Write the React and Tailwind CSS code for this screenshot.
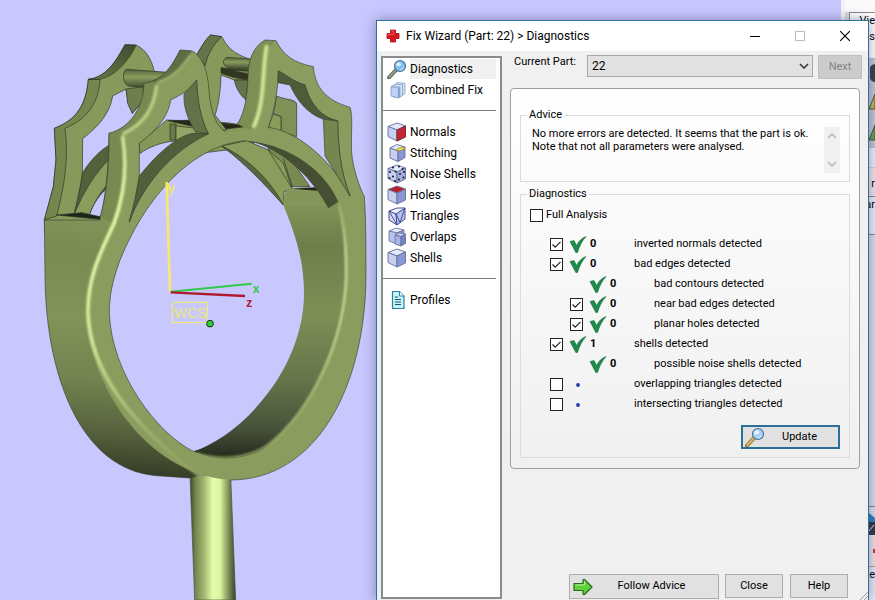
import React, { useState } from 'react';

const FONT = "font-[Roboto,'Liberation_Sans',sans-serif]";

/* ---------- Icons ---------- */

const CrossIcon = () => (
  <svg viewBox="0 0 14 14" className="h-[14px] w-[14px]">
    <path d="M4.500 1h5v3.500H13v5H9.500V13h-5V9.500H1v-5h3.500z" fill="#d8141c" stroke="#a50d12" strokeWidth=".8" />
    <path d="M5.500 2h2v3.500H2v1.500" fill="none" stroke="#f0575b" strokeWidth="1" />
  </svg>
);

const Magnifier = ({ handle = '#8b9a7c', edge = '#59664e', lens = '#7dbdf0' }) => (
  <svg viewBox="0 0 20 20" className="h-5 w-5 shrink-0">
    <path d="M2 18.500 9 11" stroke={edge} strokeWidth="4" strokeLinecap="round" />
    <path d="M2.300 18 9 11" stroke={handle} strokeWidth="2.400" strokeLinecap="round" />
    <circle cx="13" cy="7" r="5.500" fill={lens} stroke="#4a7096" strokeWidth="1.200" />
    <ellipse cx="11.600" cy="5.400" rx="2.600" ry="2" fill="#fff" opacity=".7" />
    <path d="M16.800 7.500a4 4 0 0 1-3.600 3.500" stroke="#d7eeff" fill="none" strokeWidth="1" />
  </svg>
);

const Cube = ({ top = '#e3e9fb', left = '#c7d0f1', right = '#8a98d6', children }) => (
  <svg viewBox="0 0 20 20" className="h-5 w-5 shrink-0" strokeLinejoin="round">
    <path d="M1 4.500 10 1l8.500 3-8.500 4z" fill={top} stroke="#666d94" strokeWidth=".9" />
    <path d="M1 4.500 10 8v11L1 14.500z" fill={left} stroke="#666d94" strokeWidth=".9" />
    <path d="M10 8l8.500-4v11L10 19z" fill={right} stroke="#666d94" strokeWidth=".9" />
    {children}
  </svg>
);

const CombinedIcon = () => (
  <svg viewBox="0 0 20 20" className="h-5 w-5 shrink-0" strokeLinejoin="round" stroke="#7d99c4" strokeWidth=".8">
    <path d="M9 3.500 11.500 2.500 18 3.500v10l-2 1.500H9z" fill="#d3e2f8" />
    <path d="M6.500 5 9 4l6.500 1v10.500L13 17H6.500z" fill="#dfeafb" />
    <path d="M4 6.500 6 5.500l7 1.500-1.500 1.200z" fill="#f3f8ff" />
    <path d="M4 6.500l7.500 1.700V18L4 16z" fill="#bdd3f3" />
    <path d="M11.500 8.200 13 7v10l-1.500 1z" fill="#91aedb" />
  </svg>
);

const NormalsIcon = () => (
  <Cube>
    <path d="M10 8l8.500-4v11L10 19z" fill="#c32733" stroke="#7e2a38" strokeWidth=".9" />
  </Cube>
);

const StitchingIcon = () => (
  <svg viewBox="0 0 20 20" className="h-5 w-5 shrink-0" strokeLinejoin="round" stroke="#666d94" strokeWidth=".9">
    <path d="M3 5 10 1.500 18 4l-7 4z" fill="#e3e9fb" />
    <path d="M3 5l8 3v10.500L3 15z" fill="#c7d0f1" />
    <path d="M11 8l7-4v10.500l-7 4z" fill="#8a98d6" />
    <path d="M9.500 7.400 11 5.200 18 4v1.500l-3.500 1.700L11 8z" fill="#f3e36a" stroke="#8a7d20" strokeWidth=".7" />
  </svg>
);

const NoiseIcon = () => (
  <Cube right="#a3afe0">
    {[[6, 3.500], [12, 2.500], [15.500, 5], [3, 8], [8.500, 7.500], [6, 12.500], [2.500, 14], [13, 10], [17, 8], [12, 15.500], [16.500, 13.500], [8, 17]].map(([x, y]) => (
      <circle key={`${x}-${y}`} cx={x} cy={y} r="1.100" fill="#1d2340" />
    ))}
  </Cube>
);

const HolesIcon = () => <Cube top="#b9202c" />;

const TrianglesIcon = () => (
  <svg viewBox="0 0 20 20" className="h-5 w-5 shrink-0" strokeLinejoin="round" stroke="#4a5295" strokeWidth="1">
    <path d="M2 5 9 8l1 11-8-5z" fill="#d3d9f6" />
    <path d="M9 8l9-6v11l-8 6z" fill="#b5bfeb" />
    <path d="M2 5 10 2l8 0-9 6z" fill="#eef1fd" />
    <path d="M2 5l8 14M9 8l4 8.500L18 2" fill="none" />
  </svg>
);

const OverlapsIcon = () => (
  <svg viewBox="0 0 20 20" className="h-5 w-5 shrink-0" strokeLinejoin="round" stroke="#666d94" strokeWidth=".8">
    <path d="M2 4 9 1l8 2-7 3z" fill="#e3e9fb" />
    <path d="M2 4l8 2v11l-8-3z" fill="#b9c4ee" />
    <path d="M10 6l7-3v10l-7 4z" fill="#8a98d6" />
    <path d="M8 8l4-2 6.500 1L14 9.500z" fill="#d6ddf8" />
    <path d="M8 8l6 1.500V19l-6-2z" fill="#a5b3e6" />
    <path d="M14 9.500 18.500 7v9.500L14 19z" fill="#7383c8" />
  </svg>
);

const ShellsIcon = () => <Cube />;

const ProfilesIcon = () => (
  <svg viewBox="0 0 20 20" className="h-5 w-5 shrink-0">
    <path d="M5.500 1.500h7L17 6v12.500H5.500z" fill="#c9f3fb" stroke="#2b8296" strokeWidth="1.200" />
    <path d="M12.500 1.500V6H17" fill="#f3feff" stroke="#2b8296" />
    <path d="M8 7h3M8 9.500h6M8 12h6M8 14.500h6" stroke="#15576a" strokeWidth="1.100" />
  </svg>
);

const GreenTick = () => (
  <svg viewBox="0 0 18 18" className="h-[18px] w-[18px] shrink-0">
    <path d="M1 6.500 5 5.500 7.600 10.500C9.500 6.500 12.500 3 17 1.500 13 6 10.500 11 8.500 17.500H6.800z" fill="#1f8a4c" stroke="#15703b" strokeWidth=".6" />
  </svg>
);

const BlueDot = () => (
  <svg viewBox="0 0 18 18" className="h-[18px] w-[18px] shrink-0">
    <circle cx="9" cy="10" r="1.900" fill="#2138a8" />
  </svg>
);

const ArrowIcon = () => (
  <svg viewBox="0 0 20 18" className="h-[18px] w-5">
    <path d="M1 5.500h9V2.500q0-1.500 1.500-1L19 9l-7.500 7.500q-1.500.5-1.500-1V12.500H1z" fill="#5fd03c" stroke="#276b1b" strokeWidth="1.200" strokeLinejoin="round" />
    <path d="M2.500 7h9v-4" fill="none" stroke="#b3f29a" strokeWidth="1" />
  </svg>
);

const Chevron = ({ up, color = '#333' }) => (
  <svg viewBox="0 0 10 6" className="h-[6px] w-[10px]">
    <path d={up ? 'M1 5l4-4 4 4' : 'M1 1l4 4 4-4'} fill="none" stroke={color} strokeWidth="1.500" />
  </svg>
);

/* ---------- 3D viewport ---------- */

const RingModel = () => (
  <svg viewBox="0 -60 1128 1800" className="h-[600px] w-[376px]" strokeLinejoin="round">
    <defs>
      <linearGradient id="side" gradientUnits="userSpaceOnUse" x1="60" y1="560" x2="0" y2="1370">
        <stop offset="0" stopColor="#83955a" />
        <stop offset=".15" stopColor="#7a8b52" />
        <stop offset=".4" stopColor="#829359" />
        <stop offset=".62" stopColor="#73824f" />
        <stop offset=".8" stopColor="#58633e" />
        <stop offset="1" stopColor="#2c3120" />
      </linearGradient>
      <linearGradient id="wall" gradientUnits="userSpaceOnUse" x1="0" y1="520" x2="0" y2="1320">
        <stop offset="0" stopColor="#86985b" />
        <stop offset=".2" stopColor="#6f7d4b" />
        <stop offset=".45" stopColor="#7e8f56" />
        <stop offset=".7" stopColor="#66744a" />
        <stop offset=".88" stopColor="#48523a" />
        <stop offset="1" stopColor="#23281c" />
      </linearGradient>
      <linearGradient id="stem" x1="0" x2="1" y1="0" y2="0">
        <stop offset="0" stopColor="#3f472d" />
        <stop offset=".12" stopColor="#75854f" />
        <stop offset=".32" stopColor="#a5bb73" />
        <stop offset=".5" stopColor="#e2feaa" />
        <stop offset=".66" stopColor="#dbf6a3" />
        <stop offset=".82" stopColor="#8b9d60" />
        <stop offset="1" stopColor="#3b422b" />
      </linearGradient>
      <linearGradient id="dark" x1="0" x2="1" y1="1" y2="0">
        <stop offset="0" stopColor="#6b7949" />
        <stop offset="1" stopColor="#414a2f" />
      </linearGradient>
      <linearGradient id="rod" x1="0" x2="0" y1="0" y2="1">
        <stop offset="0" stopColor="#55613c" />
        <stop offset=".4" stopColor="#8a9d5e" />
        <stop offset="1" stopColor="#3c442c" />
      </linearGradient>
      <linearGradient id="gloss" gradientUnits="userSpaceOnUse" x1="0" y1="340" x2="0" y2="1370">
        <stop offset="0" stopColor="#cbe294" />
        <stop offset=".25" stopColor="#e2fba8" />
        <stop offset=".6" stopColor="#d3ea9b" />
        <stop offset=".85" stopColor="#9fb46f" />
        <stop offset="1" stopColor="#8a9d5e" />
      </linearGradient>
      <linearGradient id="glossRight" gradientUnits="userSpaceOnUse" x1="0" y1="540" x2="0" y2="1320">
        <stop offset="0" stopColor="#97aa67" />
        <stop offset=".2" stopColor="#cfe69a" />
        <stop offset=".6" stopColor="#c3d98d" />
        <stop offset="1" stopColor="#8a9d5e" />
      </linearGradient>
      <filter id="soft" x="-20%" y="-20%" width="140%" height="140%">
        <feGaussianBlur stdDeviation="3" />
      </filter>
    </defs>

    {/* stem */}
    <path d="M570 1365H692L707 1740H584Z" fill="url(#stem)" stroke="#4a5236" strokeWidth="2" />

    <g stroke="#2e3422" strokeWidth="2">
      {/* rear left claw */}
      <path d="M133 600 160 500 168 420 163 325C215 305 258 270 265 178C320 172 350 120 375 74L408 75C440 90 455 120 463 155L490 160 440 230 397 280 385 250 378 207 338 228C330 280 295 320 248 356L247 470 222 585 300 590 290 640 135 640Z" fill="#879a5b" />
      <path d="M163 325C215 305 258 270 265 178L300 178C296 255 255 300 195 325C208 420 190 510 170 588L133 600 160 500 168 420Z" fill="#76864f" />
      <path d="M265 178C320 172 350 120 375 74L408 76C385 125 345 168 300 178Z" fill="url(#dark)" />
      <path d="M378 207 383 250 397 280 430 240 430 200Z" fill="#6f7e4b" />
      {/* rear arch on the left */}
      <path d="M247 460C275 415 300 392 328 375V500C300 520 280 550 268 585H222C235 540 242 500 247 460Z" fill="#55613b" />
      <path d="M222 585C250 515 285 460 330 415L325 490C300 520 280 550 268 585Z" fill="#8a9d5d" />
      <path d="M170 585 245 578 300 590V598Z" fill="#20241a" />
      {/* rod between the left claws */}
      <path d="M378 148 520 158 500 206 385 198C368 190 366 160 378 148Z" fill="url(#rod)" />

      {/* rear arch and cross bar */}
      <path d="M418 370 500 300 680 308 760 320V380L600 400 523 363C480 368 450 380 420 400Z" fill="#85985a" />
      <path d="M504 302 600 300 670 310 750 318 670 328 590 322Z" fill="#23281b" />
      <path d="M510 312H528V360H510Z" fill="#6b7a49" />
      <path d="M528 318 590 325V345L528 362Z" fill="#93a766" />

      {/* rear middle claw */}
      <path d="M590 105C610 70 620 55 632 45L665 50C685 85 700 100 750 118V180L703 180 663 165C662 210 655 260 645 285L680 330 630 330 600 130Z" fill="#879a5b" />
      <path d="M590 105C610 70 620 55 632 45L665 50C635 80 622 105 616 137Z" fill="#66744a" />
      <path d="M703 180H745L738 240C720 225 708 205 703 180Z" fill="#65734a" />
      <path d="M663 143 690 146 745 150V180L700 172 663 160Z" fill="#30361f" />
      <path d="M690 150 745 153V162Z" fill="#7b8b54" />
      <path d="M680 112 760 118V148L690 144C668 140 664 122 680 112Z" fill="url(#rod)" />

      {/* rear right post */}
      <path d="M830 228C850 238 870 236 884 244Q892 248 890 260V350L843 335V290L820 282Z" fill="#7f9155" />
      <path d="M820 282 843 290V335L805 322Z" fill="#8a9d5d" />
      <path d="M805 385 860 400 930 500H875L805 420Z" fill="#7a8b52" />
      <path d="M665 378 740 362 805 390 850 430 877 507 852 515 850 555C800 490 740 430 665 378Z" fill="#8a9d5d" />
      <path d="M805 390 875 503M850 415 877 500" fill="none" />
      <path d="M665 378C735 430 790 490 850 555C805 470 735 410 665 378Z" fill="#59653e" />
    </g>

    {/* inner wall on the right */}
    <path d="M850 555C850 520 860 505 880 506L952 508 985 520 1050 560V900L930 1200 780 1320H620L580 1294C720 1250 912 1050 912 820C912 720 885 640 850 555Z" fill="url(#wall)" />
    <path d="M860 512C875 500 930 500 952 508L980 560H852C850 540 852 520 860 512Z" fill="#84965a" />
    <path d="M875 506 948 502 952 512Z" fill="#22271a" />

    {/* outer side on the left */}
    <path
      d="M133 600H300C318 530 325 450 327 340L370 335C380 450 372 530 345 610C305 690 266 770 266 880C270 1060 400 1220 600 1365L570 1374 470 1367C240 1350 135 1060 135 760Z"
      fill="url(#side)"
      stroke="#3b4230"
      strokeWidth="2"
    />

    {/* front face */}
    <g stroke="#3b422d" strokeWidth="2">
      <path
        fillRule="evenodd"
        fill="#8a9d5e"
        stroke="none"
        d="M365 340C430 310 462 265 470 185C530 165 545 130 577 93C605 110 618 140 625 190C630 260 640 310 675 335L750 330C775 290 785 230 790 150C795 100 805 80 828 62C850 105 880 128 940 140C945 200 975 240 1050 262C1060 290 1052 340 1055 400C1060 450 1078 500 1093 530C1098 600 1098 680 1098 760C1098 1100 950 1380 690 1380C430 1360 262 1080 260 880C260 770 305 690 340 610C370 530 375 430 365 340Z
        M388 605C430 490 520 390 625 342C600 290 592 240 590 180C565 215 540 225 512 240C505 290 470 330 418 370V470C410 520 400 560 388 605Z
        M805 322C900 335 1000 430 1050 528C1020 450 1015 380 1013 303C960 290 930 250 915 195C880 185 860 165 835 153C834 220 820 280 805 322Z
        M360 720C335 790 328 830 328 880C335 1060 470 1240 580 1294C640 1325 740 1325 800 1280C960 1150 1040 940 1040 740C1038 650 1030 600 1015 545C960 440 850 370 740 362C600 370 450 500 360 720Z"
      />
      <path
        fill="none"
        d="M577 93C605 110 618 140 625 190C630 260 640 310 675 335M828 62C850 105 880 128 940 140C945 200 975 240 1050 262C1060 290 1052 340 1055 400C1060 450 1078 500 1093 530C1098 600 1098 680 1098 760C1098 1100 950 1380 690 1380M388 605C430 490 520 390 625 342C600 290 592 240 590 180C565 215 540 225 512 240C505 290 470 330 418 370V470C410 520 400 560 388 605ZM805 322C900 335 1000 430 1050 528C1020 450 1015 380 1013 303C960 290 930 250 915 195C880 185 860 165 835 153C834 220 820 280 805 322ZM740 362C600 370 450 500 360 720C335 790 328 830 328 880C335 1060 470 1240 580 1294"
      />
      {/* thickness of the left claw */}
      <path d="M327 340C385 325 430 270 432 190C490 180 515 140 540 90L577 93C545 140 530 165 470 185C462 265 430 310 365 340C375 430 370 530 340 610L300 592C318 530 328 450 327 340Z" fill="#788a50" stroke="none" />
      <path d="M540 90 577 93C545 140 530 165 470 185L432 190C490 180 515 140 540 90Z" fill="#616e45" stroke="none" />
      <path d="M327 340C385 325 430 270 432 190C490 180 515 140 540 90L577 93M327 340C328 450 318 530 300 592" fill="none" />
      <path d="M552 222 590 180C592 240 600 290 625 342L585 334C562 295 550 260 552 222Z" fill="#64724a" />
      <path d="M418 468C480 390 540 345 580 340H625C520 390 430 490 388 605L405 540Z" fill="#535e3b" />
      {/* thickness of the right claw */}
      <path d="M745 150C750 100 770 75 795 60L828 62C805 80 798 110 790 150C785 230 780 290 750 330L712 312C740 270 742 210 745 150Z" fill="#7d8f54" stroke="none" />
      <path d="M712 312C740 270 742 210 745 150C750 100 770 75 795 60L828 62" fill="none" />
      <path d="M835 153C860 165 880 185 915 195C930 250 960 290 1013 303L970 298C920 280 890 240 870 195L834 188Z" fill="#505b39" />
      <path d="M970 298 1013 303C1015 380 1020 450 1050 528L975 408Z" fill="#75864f" />
      <path d="M740 362C850 370 970 440 1015 545L985 565C940 480 860 400 770 370Z" fill="#464f31" stroke="none" />
    </g>

    {/* glossy edges */}
    <g fill="none" strokeLinecap="round" filter="url(#soft)">
      <path d="M368 352C382 440 375 520 342 610C305 690 262 770 264 880C270 1060 400 1220 600 1368" stroke="url(#gloss)" strokeWidth="11" />
      <path d="M372 340C425 315 462 270 469 200" stroke="#b7cd82" strokeWidth="11" />
      <path d="M475 187C520 172 545 142 570 108" stroke="#98ac69" strokeWidth="8" />
      <path d="M800 80C785 150 797 240 762 318" stroke="#cfe697" strokeWidth="12" />
      <path d="M1017 555C1034 620 1040 700 1038 780C1030 960 940 1170 800 1278C740 1318 650 1322 590 1300" stroke="url(#glossRight)" strokeWidth="7" />
    </g>

    {/* coordinate system */}
    <g fill="none" strokeWidth="7">
      <path d="M500 487 510 815" stroke="#f5ea6e" strokeWidth="8" />
      <path d="M500 487 512 510" stroke="#f5ea4e" />
      <path d="M512 815 755 791" stroke="#2fcb46" strokeWidth="6" />
      <path d="M512 817 735 828" stroke="#b01a2e" />
      <path d="M517 847H622V908H517Z" stroke="#ece67c" strokeWidth="4" />
      <circle cx="630" cy="911" r="10" fill="#2fcf3e" stroke="#0c3312" strokeWidth="3" />
    </g>
    <g className="font-['Liberation_Sans',sans-serif]">
      <text x="504" y="520" fontSize="42" fill="#f5ea4e">y</text>
      <text x="758" y="820" fontSize="36" fontWeight="700" fill="#2fcb46">x</text>
      <text x="739" y="860" fontSize="36" fontWeight="700" fill="#b01a2e">z</text>
      <text x="522" y="893" fontSize="42" fill="#ece67c">WCS</text>
    </g>
  </svg>
);

/* ---------- Docked panel behind the dialog ---------- */

const DockedPanel = () => (
  <aside className="flex w-[34px] shrink-0 flex-col overflow-hidden border-l-4 border-[#f4f4f6] bg-[#dcdde9] text-right text-[11px] leading-4 text-black">
    <div className="h-3 bg-[#fbfbfb]" />
    <div className="ml-1 h-[46px] border-l border-t border-[#8a8a8a] bg-white">
      <p>Vie</p>
      <p>s</p>
    </div>
    <div className="flex h-[30px] justify-end border-y border-[#b9bac6] bg-[#c5c7d3]">
      <svg viewBox="0 0 6 28" className="h-7 w-[6px]"><path d="M1 8q2-3 5-3v18q-4 0-5-4z" fill="#3f4048" /></svg>
    </div>
    <div className="flex h-[30px] justify-end border-b border-[#b9bac6] bg-[#c5c7d3]">
      <svg viewBox="0 0 6 28" className="h-7 w-[6px]"><path d="M0 21 6 6v15z" fill="#b7bb55" stroke="#4f5a2e" /></svg>
    </div>
    <div className="flex h-[30px] justify-end border-b border-[#b9bac6] bg-[#c5c7d3]">
      <svg viewBox="0 0 6 28" className="h-7 w-[6px]"><path d="M0 22 6 7v15z" fill="#67a356" stroke="#355a2c" /></svg>
    </div>
    <div className="h-5 border-b border-[#cfd0da] bg-[#eaf0f9]" />
    <div className="h-[29px] border-b border-[#8a8a8a] bg-[#f1e6ec] pt-2">r</div>
    <div className="h-[38px] border-b border-[#8a8a8a] bg-[#eaeef8]">ar</div>
    <div className="h-[272px] border-b border-[#8a8a8a]" />
    <div className="flex h-7 justify-end">
      <svg viewBox="0 0 6 28" className="h-7 w-[6px]">
        <path d="M0 6 6 11v4H0z" fill="#2f7fc0" />
        <path d="M0 15h6v13H0z" fill="#33363f" />
        <path d="M0 24 5 18" stroke="#e8e8e8" />
      </svg>
    </div>
    <div className="flex h-8 items-center justify-end border-b border-[#a5a5a5] bg-[#eee3ea]">
      <span className="h-1 w-0.5 bg-[#b4402f]" />
    </div>
    <div className="flex-1 bg-[#e9e8f2]">e</div>
  </aside>
);

/* ---------- Dialog parts ---------- */

const NAV_GROUPS = [
  [
    { label: 'Diagnostics', Icon: Magnifier },
    { label: 'Combined Fix', Icon: CombinedIcon },
  ],
  [
    { label: 'Normals', Icon: NormalsIcon },
    { label: 'Stitching', Icon: StitchingIcon },
    { label: 'Noise Shells', Icon: NoiseIcon },
    { label: 'Holes', Icon: HolesIcon },
    { label: 'Triangles', Icon: TrianglesIcon },
    { label: 'Overlaps', Icon: OverlapsIcon },
    { label: 'Shells', Icon: ShellsIcon },
  ],
  [{ label: 'Profiles', Icon: ProfilesIcon }],
];

const ROWS = [
  { id: 'normals', label: 'inverted normals detected', count: 0, box: true, checked: true },
  { id: 'edges', label: 'bad edges detected', count: 0, box: true, checked: true },
  { id: 'contours', label: 'bad contours detected', count: 0, nested: true },
  { id: 'near', label: 'near bad edges detected', count: 0, box: true, checked: true, nested: true },
  { id: 'holes', label: 'planar holes detected', count: 0, box: true, checked: true, nested: true },
  { id: 'shells', label: 'shells detected', count: 1, box: true, checked: true },
  { id: 'noise', label: 'possible noise shells detected', count: 0, nested: true },
  { id: 'overlap', label: 'overlapping triangles detected', box: true, checked: false },
  { id: 'intersect', label: 'intersecting triangles detected', box: true, checked: false },
];

const CheckBox = ({ id, checked, onChange }) => (
  <span className="grid h-[13px] w-[13px] shrink-0">
    <input
      id={id}
      type="checkbox"
      checked={checked}
      onChange={onChange}
      className="col-start-1 row-start-1 h-[13px] w-[13px] appearance-none border border-[#222] bg-white"
    />
    {checked && (
      <svg viewBox="0 0 13 13" className="pointer-events-none col-start-1 row-start-1 h-[13px] w-[13px]">
        <path d="M2.500 6.500 5.200 9.200 10.500 3.800" fill="none" stroke="#222" strokeWidth="1.200" />
      </svg>
    )}
  </span>
);

const SideNav = ({ active, onSelect }) => (
  <nav className="mb-px w-[121px] shrink-0 border-2 border-[#8b8b8b] bg-white pr-1 text-[12px]">
    {NAV_GROUPS.map((group, index) => (
      <div key={group[0].label}>
        {index > 0 && (
          <div className="flex h-[21px] items-center">
            <hr className="w-full border-[#7d7d7d]" />
          </div>
        )}
        {group.map(({ label, Icon }) => (
          <button
            key={label}
            type="button"
            onClick={() => onSelect(label)}
            className="flex h-[21px] w-full items-center gap-[3px] pl-1 text-left"
          >
            <Icon />
            <span className={`flex h-5 flex-1 items-center whitespace-nowrap ${active === label ? 'bg-[#f0f0f0]' : ''}`}>{label}</span>
          </button>
        ))}
      </div>
    ))}
  </nav>
);

const TitleBar = () => (
  <header className="flex h-[30px] shrink-0 items-center bg-white pl-[9px] text-[12px]">
    <CrossIcon />
    <h1 className="flex-1 pl-[6px]">Fix Wizard (Part: 22) &gt; Diagnostics</h1>
    <button type="button" aria-label="Minimize" className="grid h-full w-[45px] place-items-center">
      <svg viewBox="0 0 10 10" className="h-[10px] w-[10px]"><path d="M0 5.500h10" stroke="#000" /></svg>
    </button>
    <button type="button" aria-label="Maximize" disabled className="grid h-full w-[45px] place-items-center">
      <svg viewBox="0 0 10 10" className="h-[10px] w-[10px]"><path d="M.5.5h9v9h-9z" fill="none" stroke="#bdbdbd" /></svg>
    </button>
    <button type="button" aria-label="Close window" className="grid h-full w-[46px] place-items-center">
      <svg viewBox="0 0 10 10" className="h-[10px] w-[10px]"><path d="M0 0l10 10M10 0 0 10" stroke="#000" strokeWidth="1.200" /></svg>
    </button>
  </header>
);

const FixWizard = () => {
  const [active, setActive] = useState('Diagnostics');
  const [fullAnalysis, setFullAnalysis] = useState(false);
  const [checks, setChecks] = useState(() => Object.fromEntries(ROWS.map((row) => [row.id, !!row.checked])));

  const toggle = (id) => setChecks((prev) => ({ ...prev, [id]: !prev[id] }));

  return (
    <section className="absolute bottom-0 left-[376px] right-[6px] top-5 flex flex-col overflow-hidden border border-b-0 border-[#2a7298] bg-[#f0f0f0] shadow-[0_0_12px_rgba(40,40,90,0.45)]">
      <TitleBar />
      <div className="flex flex-1">
        <div className="flex border-l-4 border-[#e6f1fa] pt-[5px]">
          <SideNav active={active} onSelect={setActive} />
        </div>
        <main className="flex flex-1 flex-col pl-2 pr-[6px] pt-1 text-[11px]">
          <div className="flex items-start">
            <label htmlFor="part" className="w-[77px] shrink-0 pl-1 pt-px leading-3">Current Part:</label>
            <div className="grid flex-1">
              <select id="part" className="col-start-1 row-start-1 h-[22px] appearance-none border border-[#a8a8a8] bg-[#e1e1e1] pl-1 text-[12px]">
                <option>22</option>
              </select>
              <span className="pointer-events-none col-start-1 row-start-1 flex items-center justify-end pr-1">
                <Chevron />
              </span>
            </div>
            <button type="button" disabled className="ml-[5px] h-6 w-11 border border-[#bfbfbf] bg-[#cccccc] text-[#838383]">Next</button>
          </div>

          <div className="mr-[2px] mt-[9px] rounded border border-[#a0a0a0] bg-linear-to-b from-white to-[#f0f0f0] px-[9px] pb-[10px] pt-5">
            <fieldset className="border border-[#dcdcdc] pb-2 pl-[11px] pr-[9px]">
              <legend className="-ml-[5px] px-0.5 leading-3">Advice</legend>
              <div className="flex justify-between pt-[6px]">
                <p className="leading-[13px]">
                  No more errors are detected. It seems that the part is ok.
                  <br />
                  Note that not all parameters were analysed.
                </p>
                <div className="flex h-[46px] w-4 flex-col items-center justify-between bg-[#f0f0f0] py-[6px]">
                  <Chevron up color="#b5b5b5" />
                  <Chevron color="#b5b5b5" />
                </div>
              </div>
            </fieldset>

            <fieldset className="mt-[6px] border border-[#dcdcdc] pb-2 pl-[9px] pr-[9px]">
              <legend className="-ml-[3px] px-0.5 leading-3">Diagnostics</legend>
              <div className="flex h-[30px] items-center gap-[3px]">
                <CheckBox id="full" checked={fullAnalysis} onChange={() => setFullAnalysis(!fullAnalysis)} />
                <label htmlFor="full">Full Analysis</label>
              </div>
              <ul className="pl-5 pt-1">
                {ROWS.map((row) => (
                  <li key={row.id} className={`flex h-5 items-center ${row.nested ? 'pl-5' : ''}`}>
                    <span className="flex w-[19px] shrink-0">
                      {row.box && <CheckBox id={row.id} checked={checks[row.id]} onChange={() => toggle(row.id)} />}
                    </span>
                    {row.count === undefined ? <BlueDot /> : <GreenTick />}
                    <b className="w-[47px] shrink-0 pl-[3px]">{row.count}</b>
                    {row.box ? <label htmlFor={row.id}>{row.label}</label> : <span>{row.label}</span>}
                  </li>
                ))}
              </ul>
              <div className="flex justify-end pt-[11px]">
                <button type="button" className="flex h-6 w-[99px] items-center border-2 border-[#2b7096] bg-[#e1e1e1] pl-0.5">
                  <Magnifier handle="#dcb56b" edge="#8f6c33" lens="#a9d0f2" />
                  <span className="flex-1 pr-1 text-center">Update</span>
                </button>
              </div>
            </fieldset>
          </div>

          <footer className="mt-auto flex items-start justify-end pb-px pr-[14px]">
            <button type="button" className="mr-[6px] flex h-[25px] w-[150px] items-center border border-[#adadad] bg-[#e1e1e1] pl-[3px]">
              <ArrowIcon />
              <span className="flex-1 pr-2 text-center">Follow Advice</span>
            </button>
            <button type="button" className="mr-[7px] h-6 w-[58px] border border-[#adadad] bg-[#e1e1e1]">Close</button>
            <button type="button" className="h-6 w-[58px] border border-[#adadad] bg-[#e1e1e1]">Help</button>
          </footer>
        </main>
      </div>
      <svg viewBox="0 0 8 8" className="pointer-events-none absolute bottom-0 right-0 h-2 w-2">
        <path d="M0 8 8 0M4 8 8 4" stroke="#9a9a9a" />
      </svg>
    </section>
  );
};

export default function App() {
  return (
    <div className={`relative flex h-screen overflow-hidden text-black ${FONT}`}>
      <div className="flex-1 bg-[#c8c8fe]">
        <RingModel />
      </div>
      <DockedPanel />
      <FixWizard />
    </div>
  );
}
